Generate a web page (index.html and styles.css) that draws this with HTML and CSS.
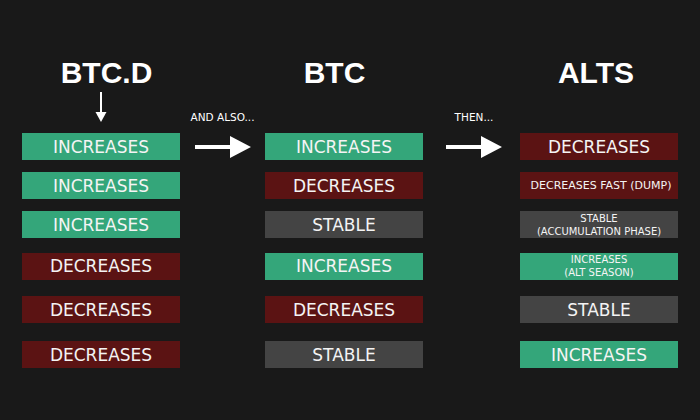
FILE: index.html
```html
<!DOCTYPE html>
<html>
<head>
<meta charset="utf-8">
<link rel="stylesheet" href="styles.css">
</head>
<body>
<div class="chart">
  <div class="top c1">
    <div class="title t1">BTC.D</div>
    <svg class="down" width="12" height="30" viewBox="0 0 12 30"><rect x="5" y="0" width="2" height="21" fill="#fff"/><polygon points="0.5,20 11.5,20 6,30" fill="#fff"/></svg>
  </div>
  <div class="top-label c2"><span class="label">AND ALSO...</span></div>
  <div class="top c3"><div class="title t2">BTC</div></div>
  <div class="top-label c4"><span class="label">THEN...</span></div>
  <div class="top c5"><div class="title t3">ALTS</div></div>

  <div class="box green c1">INCREASES</div>
  <div class="arrow-cell c2"><svg width="56" height="22" viewBox="0 0 56 22"><path d="M0 9H35V0L56 11L35 22V13H0Z" fill="#fff"/></svg></div>
  <div class="box green c3">INCREASES</div>
  <div class="arrow-cell c4"><svg width="56" height="22" viewBox="0 0 56 22"><path d="M0 9H35V0L56 11L35 22V13H0Z" fill="#fff"/></svg></div>
  <div class="box red c5">DECREASES</div>

  <div class="box green c1">INCREASES</div>
  <div class="box red c3">DECREASES</div>
  <div class="box red c5 small">DECREASES FAST (DUMP)</div>

  <div class="box green c1">INCREASES</div>
  <div class="box gray c3">STABLE</div>
  <div class="box gray c5 tiny">STABLE<br>(ACCUMULATION PHASE)</div>

  <div class="box red c1">DECREASES</div>
  <div class="box green c3">INCREASES</div>
  <div class="box green c5 tiny">INCREASES<br>(ALT SEASON)</div>

  <div class="box red c1">DECREASES</div>
  <div class="box red c3">DECREASES</div>
  <div class="box gray c5">STABLE</div>

  <div class="box red c1">DECREASES</div>
  <div class="box gray c3">STABLE</div>
  <div class="box green c5">INCREASES</div>
</div>
</body>
</html>
```
FILE: styles.css
```css
html, body {
  margin: 0;
  padding: 0;
  background: #191919;
}
body {
  width: 700px;
  height: 420px;
  overflow: hidden;
  font-family: "DejaVu Sans", sans-serif;
  color: #f2f2f2;
}
.chart {
  display: grid;
  grid-template-columns: 158px 85px 158px 97px 158px;
  grid-template-rows: 133px 39px 39px 41.5px 43.5px 45px 27px;
  padding-left: 22px;
}
.c1 { grid-column: 1; }
.c2 { grid-column: 2; }
.c3 { grid-column: 3; }
.c4 { grid-column: 4; padding-left: 5px; }
.c5 { grid-column: 5; }

.top {
  display: flex;
  flex-direction: column;
  align-items: center;
}
.title {
  margin-top: 58px;
  font-family: "Liberation Sans", Arial, sans-serif;
  font-weight: bold;
  font-size: 30px;
  line-height: 30px;
  color: #fff;
}
.t1 { padding-left: 11px; }
.t2 { padding-right: 19px; }
.t3 { padding-right: 6px; }
.down {
  display: block;
  margin-top: 4px;
  margin-right: 1px;
}
.top-label {
  display: flex;
  align-items: flex-end;
  justify-content: center;
}
.label {
  font-size: 10.5px;
  line-height: 12px;
  margin-bottom: 10px;
  color: #fff;
}
.arrow-cell {
  display: flex;
  justify-content: center;
  align-items: flex-start;
}
.arrow-cell svg {
  display: block;
  margin-top: 3px;
}
.box {
  height: 27px;
  display: flex;
  align-items: center;
  justify-content: center;
  text-align: center;
  font-size: 17px;
  line-height: 20px;
  color: #f4f4f4;
}
.green { background: #34a67a; }
.red { background: #5b1313; }
.gray { background: #444444; }
.small {
  font-size: 11px;
  padding-left: 4px;
}
.tiny {
  font-size: 10px;
  line-height: 13px;
}
```
